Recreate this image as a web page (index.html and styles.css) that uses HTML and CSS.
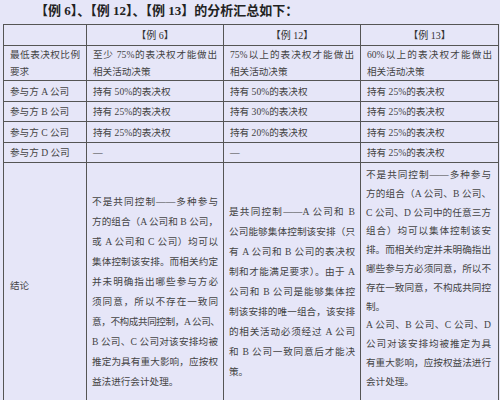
FILE: index.html
```html
<!DOCTYPE html>
<html lang="zh">
<head>
<meta charset="utf-8">
<link rel="stylesheet" href="styles.css">
</head>
<body>
<div class="title">【例 6】、【例 12】、【例 13】的分析汇总如下：</div>
<table class="grid">
  <colgroup>
    <col class="c1"><col class="c2"><col class="c3"><col class="c4">
  </colgroup>
  <tr class="r-head">
    <td></td>
    <td class="hd">【例 6】</td>
    <td class="hd">【例 12】</td>
    <td class="hd">【例 13】</td>
  </tr>
  <tr class="r-req">
    <td><span class="ln">最低表决权比例</span>要求</td>
    <td><span class="ln">至少 75%的表决权才能做出</span>相关活动决策</td>
    <td><span class="ln">75%以上的表决权才能做出</span>相关活动决策</td>
    <td><span class="ln">60%以上的表决权才能做出</span>相关活动决策</td>
  </tr>
  <tr class="r-one">
    <td>参与方 A 公司</td>
    <td>持有 50%的表决权</td>
    <td>持有 50%的表决权</td>
    <td>持有 25%的表决权</td>
  </tr>
  <tr class="r-two">
    <td>参与方 B 公司</td>
    <td>持有 25%的表决权</td>
    <td>持有 30%的表决权</td>
    <td>持有 25%的表决权</td>
  </tr>
  <tr class="r-one">
    <td>参与方 C 公司</td>
    <td>持有 25%的表决权</td>
    <td>持有 20%的表决权</td>
    <td>持有 25%的表决权</td>
  </tr>
  <tr class="r-two">
    <td>参与方 D 公司</td>
    <td>—</td>
    <td>—</td>
    <td>持有 25%的表决权</td>
  </tr>
  <tr class="r-concl">
    <td class="lbl">结论</td>
    <td class="mid">
      <span class="ln">不是共同控制——多种参与</span>
      <span class="ln">方的组合（A 公司和 B 公司，</span>
      <span class="ln">或 A 公司和 C 公司）均可以</span>
      <span class="ln">集体控制该安排。而相关约定</span>
      <span class="ln">并未明确指出哪些参与方必</span>
      <span class="ln">须同意，所以不存在一致同</span>
      <span class="ln tight">意，不构成共同控制，A 公司、</span>
      <span class="ln">B 公司、C 公司对该安排均被</span>
      <span class="ln">推定为具有重大影响，应按权</span>
      <span class="end">益法进行会计处理。</span>
    </td>
    <td class="mid">
      <span class="ln">是共同控制——A 公司和 B</span>
      <span class="ln">公司能够集体控制该安排（只</span>
      <span class="ln">有 A 公司和 B 公司的表决权</span>
      <span class="ln">制和才能满足要求）。由于 A</span>
      <span class="ln">公司和 B 公司是能够集体控</span>
      <span class="ln">制该安排的唯一组合，该安排</span>
      <span class="ln">的相关活动必须经过 A 公司</span>
      <span class="ln">和 B 公司一致同意后才能决</span>
      <span class="end">策。</span>
    </td>
    <td class="top">
      <span class="ln">不是共同控制——多种参与</span>
      <span class="ln">方的组合（A 公司、B 公司、</span>
      <span class="ln">C 公司、D 公司中的任意三方</span>
      <span class="ln">组合）均可以集体控制该安</span>
      <span class="ln">排。而相关约定并未明确指出</span>
      <span class="ln">哪些参与方必须同意，所以不</span>
      <span class="ln">存在一致同意，不构成共同控</span>
      <span class="end">制。</span>
      <span class="ln">A 公司、B 公司、C 公司、D</span>
      <span class="ln">公司对该安排均被推定为具</span>
      <span class="ln">有重大影响，应按权益法进行</span>
      <span class="end">会计处理。</span>
    </td>
  </tr>
</table>
</body>
</html>
```
FILE: styles.css
```css
html, body {
  margin: 0;
  padding: 0;
  background: #e6e6f8;
}
body {
  width: 500px;
  height: 400px;
  overflow: hidden;
  font-family: "Liberation Serif", "Noto Sans CJK SC", serif;
  color: #444;
}
.title {
  height: 24px;
  line-height: 21px;
  padding-left: 35px;
  font-size: 13px;
  font-weight: bold;
  color: #222;
  box-sizing: border-box;
}
.grid {
  margin-left: 3px;
  width: 495px;
  border-collapse: collapse;
  table-layout: fixed;
  border: 1.5px solid #3a3a3a;
  font-size: 9.6px;
}
.c1 { width: 83px; }
.c2 { width: 137px; }
.c3 { width: 137px; }
.c4 { width: 138px; }
.grid td {
  border: 1px solid #555;
  padding: 0 6px;
  vertical-align: middle;
  line-height: 17px;
  text-align: left;
  white-space: nowrap;
  overflow: hidden;
}
.ln {
  display: block;
  white-space: nowrap;
  text-align: justify;
  text-align-last: justify;
}
.ln.tight {
  letter-spacing: -0.4px;
}
.end {
  display: block;
  white-space: nowrap;
}
.r-head td { height: 20px; }
.r-head .hd { text-align: center; font-size: 10px; color: #333; }
.r-req td { height: 33px; }
.r-one td { height: 20px; }
.r-two td { height: 19px; }
.r-concl td {
  height: 233px;
  line-height: 20px;
  padding-left: 5px;
  padding-right: 5px;
}
.r-concl .mid { padding-top: 12px; }
.r-concl .lbl { padding-top: 0; padding-left: 6px; }
.r-concl .top {
  vertical-align: top;
  line-height: 18.8px;
  padding-top: 3px;
  padding-right: 7px;
}
```
